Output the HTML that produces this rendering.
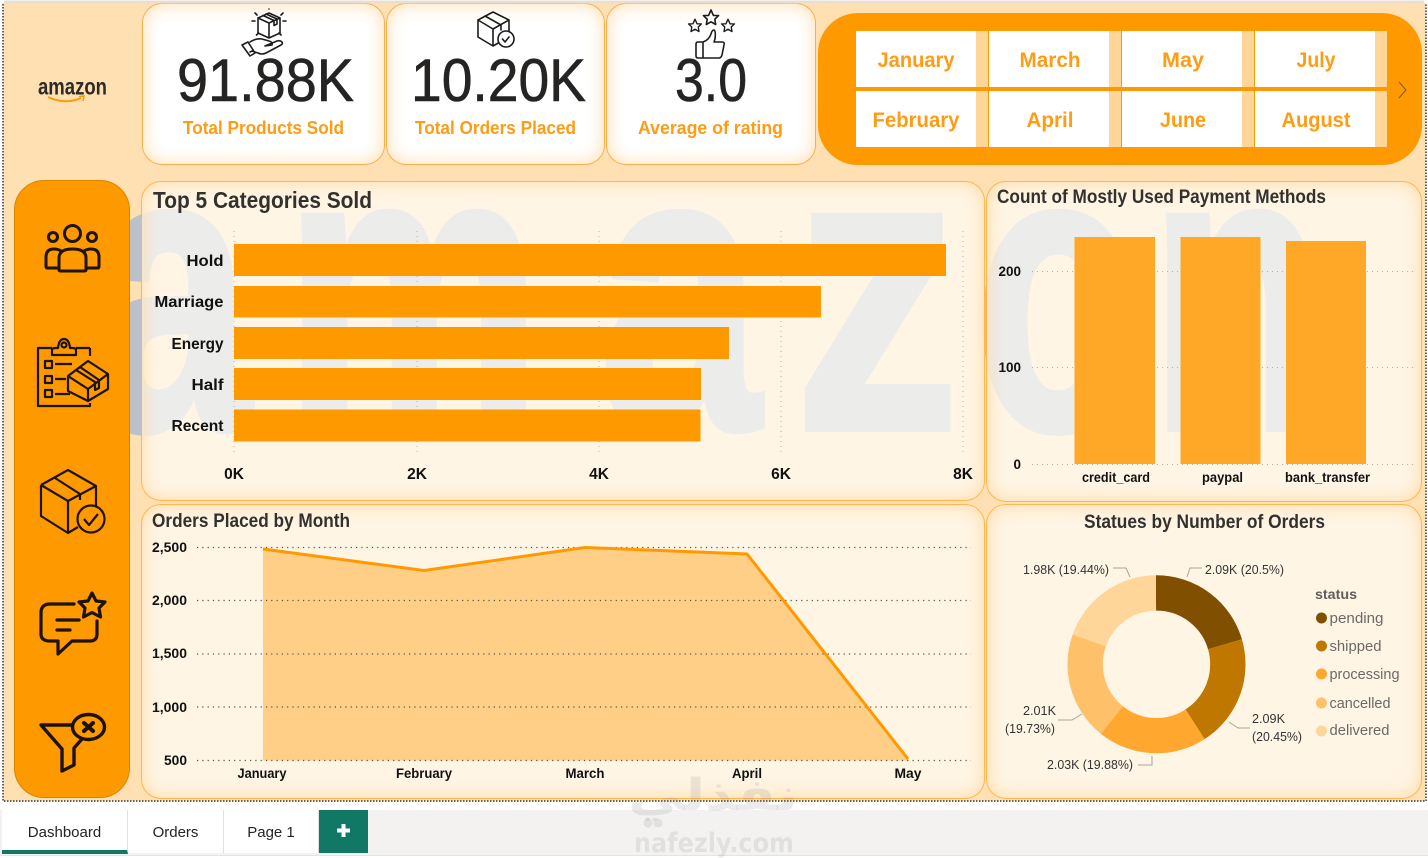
<!DOCTYPE html>
<html lang="en"><head><meta charset="utf-8"><title>Amazon Dashboard</title>
<style>
html,body{margin:0;padding:0;width:1428px;height:858px;overflow:hidden;background:#fff}
#root{position:relative;width:1428px;height:858px;overflow:hidden;font-family:"Liberation Sans",sans-serif}
#canvas{position:absolute;left:3px;top:3px;width:1423px;height:798px;background:#ffe0b2}
svg.l{position:absolute;left:0;top:0;width:1428px;height:858px}
.card,.panel{position:absolute;box-sizing:border-box}
.card{background:#fff;border:1px solid #f5b04a;border-radius:20px;box-shadow:inset 0 0 18px #ffdcae}
.panel{background:rgba(255,252,248,.72);border:1px solid #ffb64f;border-radius:20px;box-shadow:inset 0 0 18px #ffd9a3}
.slicer{position:absolute;left:818px;top:13px;width:604px;height:152px;background:#ff9900;border-radius:40px}
.cell{position:absolute;width:132px;height:56px;background:#ffd698}
.cell i{position:absolute;left:0;top:0;width:120px;height:56px;background:#fff}
.side{position:absolute;left:14px;top:180px;width:116px;height:618px;background:#ff9900;border:1px solid #d98500;box-sizing:border-box;border-radius:30px}
.tabs{position:absolute;left:0;top:810px;width:1428px;height:45px;background:#f3f2f1;border-bottom:1px solid #e4e4e4}
.tab{position:absolute;top:0;height:43px;background:#fff;border-right:1px solid #e1dfdd;box-sizing:border-box;text-align:center;font-size:15px;line-height:45px;color:#252423}
.plus{position:absolute;left:319px;top:810px;width:49px;height:43px;background:#117865}
</style></head><body>
<div id="root">
<div id="canvas"></div>
<svg class="l" viewBox="0 0 1428 858"><g fill="#bcc0c8" stroke="#bcc0c8" stroke-width="8" font-family="Liberation Sans,sans-serif" font-weight="700" font-size="400">
<text transform="translate(90 428) scale(.72 1)">a</text>
<text transform="translate(285 428) scale(.72 1)">m</text>
<text transform="translate(600 428) scale(.72 1)">a</text>
<text transform="translate(795 428) scale(.82 1)">z</text>
<text transform="translate(975 428) scale(.68 1)">o</text>
<text transform="translate(1150 428) scale(.72 1)">n</text></g></svg>

<div class="card" style="left:142px;top:3px;width:243px;height:162px"></div>
<div class="card" style="left:386px;top:3px;width:219px;height:162px"></div>
<div class="card" style="left:606px;top:3px;width:210px;height:162px"></div>

<div class="slicer"></div>
<div class="cell" style="left:856px;top:31px"><i></i></div>
<div class="cell" style="left:989px;top:31px"><i></i></div>
<div class="cell" style="left:1122px;top:31px"><i></i></div>
<div class="cell" style="left:1255px;top:31px"><i></i></div>
<div class="cell" style="left:856px;top:91px"><i></i></div>
<div class="cell" style="left:989px;top:91px"><i></i></div>
<div class="cell" style="left:1122px;top:91px"><i></i></div>
<div class="cell" style="left:1255px;top:91px"><i></i></div>

<div class="side"></div>
<div class="panel" style="left:141px;top:181px;width:844px;height:320px"></div>
<div class="panel" style="left:986px;top:181px;width:436px;height:321px"></div>
<div class="panel" style="left:141px;top:504px;width:844px;height:295px"></div>
<div class="panel" style="left:986px;top:504px;width:436px;height:295px"></div>

<div class="tabs"></div>
<div class="tab" style="left:2px;top:810px;width:126px;border-bottom:4px solid #117865;height:44px;line-height:45px">Dashboard</div>
<div class="tab" style="left:128px;top:810px;width:96px">Orders</div>
<div class="tab" style="left:224px;top:810px;width:95px">Page 1</div>
<div class="plus"></div>

<svg class="l" viewBox="0 0 1428 858" font-family="Liberation Sans,sans-serif">
<!-- canvas dotted border -->
<g fill="none" stroke="#666" stroke-width="2" stroke-dasharray="1.500 1.500">
<path d="M3 4V801H1426V4"/></g>
<path d="M4 2H1424" stroke="#e8dfd2" stroke-width="3"/>

<!-- logo -->
<text x="38" y="94.500" font-size="23" font-weight="700" fill="#2e2a25" textLength="69" lengthAdjust="spacingAndGlyphs">amazon</text>
<path d="M48 97Q65 105 81 98" fill="none" stroke="#ff9900" stroke-width="2"/><path d="M79 96.500L84 96 83 101" fill="none" stroke="#ff9900" stroke-width="1.500"/>

<!-- KPI -->
<g fill="#252423" stroke="#252423" stroke-width=".6" font-size="60">
<text x="177" y="101" textLength="177" lengthAdjust="spacingAndGlyphs">91.88K</text>
<text x="411" y="101" textLength="175" lengthAdjust="spacingAndGlyphs">10.20K</text>
<text x="675" y="101" textLength="72" lengthAdjust="spacingAndGlyphs">3.0</text></g>
<g fill="#ff9c14" font-size="18" font-weight="700">
<text x="183" y="134" textLength="161" lengthAdjust="spacingAndGlyphs">Total Products Sold</text>
<text x="415" y="134" textLength="161" lengthAdjust="spacingAndGlyphs">Total Orders Placed</text>
<text x="638" y="134" textLength="145" lengthAdjust="spacingAndGlyphs">Average of rating</text></g>

<!-- KPI icons -->
<g fill="none" stroke="#1c1c1c" stroke-width="1.600" stroke-linejoin="round" stroke-linecap="round">
<path d="M269 13l-11 5v15l11 5 11-5V18zM258 18l11 5 11-5M269 23v15M263 15.500l11 5v5l3-1.500v-5l-11-5"/>
<path d="M252 21h3M283 21h3M255 13l2 2M283 13l-2 2M269 9v0M258.500 33l-2 2M279 33l2 2"/>
<path d="M250 42q6-4 12-3l7 2q4 1 3 4l-7 1 12-5q3-1 5 1 1 2-1 3l-15 8q-4 2-8 0l-6-2-2 1"/>
<path d="M242 45l6-3 7 11-5 3z"/>
<path d="M493 12l-15 8v17l15 9 16-9V20zM478 20l15 9 16-9M493 29v17M485 16l16 9v5"/>
<circle cx="506" cy="39" r="8" fill="#fff"/><path d="M502.500 39l2.500 3 4-5"/>
<path transform="translate(711 18)" d="M0-8 2.400-2.600 7.600-2.500 3.800 1.200 4.700 6.500 0 3.800-4.700 6.500-3.800 1.200-7.600-2.500-2.400-2.600Z"/>
<path transform="translate(695 26) scale(.85)" d="M0-8 2.400-2.600 7.600-2.500 3.800 1.200 4.700 6.500 0 3.800-4.700 6.500-3.800 1.200-7.600-2.500-2.400-2.600Z"/>
<path transform="translate(728 26) scale(.85)" d="M0-8 2.400-2.600 7.600-2.500 3.800 1.200 4.700 6.500 0 3.800-4.700 6.500-3.800 1.200-7.600-2.500-2.400-2.600Z"/>
<path d="M703 42h-5q-2 0-2 2v12q0 2 2 2h5zM703 42q6-2 8-8 1-4 3-4 2 1 1 9l-1 3h8q3 0 2 3l-2 10q-1 3-3 3h-16"/>
</g>

<!-- slicer text -->
<g fill="#ff9c14" font-size="21" font-weight="700" text-anchor="middle">
<text x="916" y="67" textLength="77" lengthAdjust="spacingAndGlyphs">January</text>
<text x="1050" y="67" textLength="61" lengthAdjust="spacingAndGlyphs">March</text>
<text x="1183" y="67" textLength="42" lengthAdjust="spacingAndGlyphs">May</text>
<text x="1316" y="67" textLength="39" lengthAdjust="spacingAndGlyphs">July</text>
<text x="916" y="127" textLength="87" lengthAdjust="spacingAndGlyphs">February</text>
<text x="1050" y="127" textLength="47" lengthAdjust="spacingAndGlyphs">April</text>
<text x="1183" y="127" textLength="46" lengthAdjust="spacingAndGlyphs">June</text>
<text x="1316" y="127" textLength="69" lengthAdjust="spacingAndGlyphs">August</text></g>
<path d="M1399 82l7 8-7 8" fill="none" stroke="#7a5a20" stroke-width="1"/>
<path d="M856 89H1387" stroke="#ff9900" stroke-width="4"/>

<!-- sidebar icons -->
<g fill="none" stroke="#1f1403" stroke-width="3" stroke-linejoin="round" stroke-linecap="round">
<circle cx="72.500" cy="233.500" r="8"/><circle cx="53" cy="237" r="4.500"/><circle cx="92" cy="237" r="4.500"/>
<path d="M59 270v-12q0-9 13.500-9T86 258v12q0 1-2 1H61q-2 0-2-1z"/>
<path d="M59 268H47q-1 0-1-2v-9q0-8 8-8 4 0 7 2M86 268h12q1 0 1-2v-9q0-8-8-8-4 0-7 2"/>
</g>
<g fill="none" stroke="#1c1305" stroke-width="2.200" stroke-linejoin="round">
<path d="M90 348v8M52 348H38v58h52v-3M76 348h14"/>
<path d="M52 353v-3q0-2 3-2h3q1-9 6-9t6 9h3q3 0 3 2v5H52z"/><circle cx="64" cy="345" r="2.500"/>
<path d="M45 361h7v7h-7zM45 376h7v7h-7zM45 390h7v7h-7zM55 364h17M55 379h11M55 394h15"/>
<path d="M68 376l20-15 20 13v15l-20 12-20-10zM68 376l20 13 20-15M88 389v12M76 370l19 12v8l4-2 0-8-19-13"/>
</g>
<g fill="none" stroke="#1f1403" stroke-width="2.200" stroke-linejoin="round">
<path d="M41 485l27-15 28 16v20M41 485v31l27 17 10-6M41 485l27 16 28-15M68 501v32M55 478l25 16v6"/>
<circle cx="91" cy="519" r="13.500"/><path d="M84 519l5 6 9-11"/>
</g>
<g fill="none" stroke="#1c1305" stroke-width="3.200" stroke-linejoin="round" stroke-linecap="round">
<path d="M74 604H50q-9 0-9 9v21q0 7 9 7h8v13l14-13h18q7 0 7-7v-13"/>
<path d="M57 620h22M57 630h13"/>
<path d="M92 593l4 8 9 1-6 6 1.500 9-8.500-4.500-8.500 4.500 1.500-9-6-6 9-1z"/>
</g>
<g fill="none" stroke="#1c1305" stroke-width="3.400" stroke-linejoin="round" stroke-linecap="round">
<ellipse cx="88.500" cy="727" rx="16" ry="12.500"/>
<path d="M84 723l9 8M93 723l-9 8" stroke-width="4"/>
<path d="M72 725H41l21 24v22l12-6v-17l8-9"/>
</g>

<!-- Top 5 categories -->
<text x="153" y="208" font-size="23" font-weight="700" fill="#33312e" textLength="219" lengthAdjust="spacingAndGlyphs">Top 5 Categories Sold</text>
<g stroke="#b9b3aa" stroke-width="1" stroke-dasharray="1 4">
<path d="M234 231V455M417 231V455M599 231V455M781 231V455M963 231V455"/></g>
<g fill="#ff9900"><rect x="234" y="244" width="712" height="32"/><rect x="234" y="286" width="587" height="31.500"/><rect x="234" y="327" width="495" height="32"/><rect x="234" y="368" width="467" height="32"/><rect x="234" y="409.500" width="466.500" height="32"/></g>
<g fill="#111" font-size="15.500" font-weight="700" text-anchor="end">
<text x="223.500" y="266" textLength="37" lengthAdjust="spacingAndGlyphs">Hold</text>
<text x="223.500" y="307" textLength="69" lengthAdjust="spacingAndGlyphs">Marriage</text>
<text x="223.500" y="349" textLength="52" lengthAdjust="spacingAndGlyphs">Energy</text>
<text x="223.500" y="390" textLength="32" lengthAdjust="spacingAndGlyphs">Half</text>
<text x="223.500" y="431" textLength="52" lengthAdjust="spacingAndGlyphs">Recent</text></g>
<g fill="#111" font-size="15.500" font-weight="700" text-anchor="middle">
<text x="234" y="479">0K</text><text x="417" y="479">2K</text><text x="599" y="479">4K</text><text x="781" y="479">6K</text><text x="963" y="479">8K</text></g>

<!-- Payment -->
<text x="997" y="203" font-size="19" font-weight="700" fill="#33312e" textLength="329" lengthAdjust="spacingAndGlyphs">Count of Mostly Used Payment Methods</text>
<g stroke="#b9b3aa" stroke-width="1" stroke-dasharray="1 4"><path d="M1032 271.500H1415M1032 367.500H1415M1032 464.500H1415"/></g>
<g fill="#ffa726"><rect x="1074.500" y="237" width="80.500" height="227"/><rect x="1180.500" y="237" width="80" height="227"/><rect x="1286" y="241" width="80" height="223"/></g>
<g fill="#111" font-size="13.500" font-weight="700" text-anchor="end">
<text x="1021" y="276">200</text><text x="1021" y="372">100</text><text x="1021" y="469">0</text></g>
<g fill="#111" font-size="13.500" font-weight="700">
<text x="1082" y="482" textLength="68" lengthAdjust="spacingAndGlyphs">credit_card</text>
<text x="1202" y="482" textLength="41" lengthAdjust="spacingAndGlyphs">paypal</text>
<text x="1285" y="482" textLength="85" lengthAdjust="spacingAndGlyphs">bank_transfer</text></g>

<!-- Line chart -->
<text x="152" y="527" font-size="19" font-weight="700" fill="#33312e" textLength="198" lengthAdjust="spacingAndGlyphs">Orders Placed by Month</text>
<polygon points="263,549 424,570.500 585,547.500 747,554 908,759 908,760.500 263,760.500" fill="#ffcf88"/>
<g stroke="#57504a" stroke-width="1.200" stroke-dasharray="1.200 4.100"><path d="M197 547.500H971M197 600.500H971M197 654H971M197 707H971M197 760.500H971"/></g>
<polyline points="263,549 424,570.500 585,547.500 747,554 908,759" fill="none" stroke="#ff9900" stroke-width="3"/>
<g fill="#111" font-size="13.500" font-weight="700" text-anchor="end">
<text x="187" y="552" textLength="35" lengthAdjust="spacingAndGlyphs">2,500</text><text x="187" y="605" textLength="35" lengthAdjust="spacingAndGlyphs">2,000</text><text x="187" y="658" textLength="35" lengthAdjust="spacingAndGlyphs">1,500</text><text x="187" y="712" textLength="35" lengthAdjust="spacingAndGlyphs">1,000</text><text x="187" y="765" textLength="23" lengthAdjust="spacingAndGlyphs">500</text></g>
<g fill="#111" font-size="13.500" font-weight="700" text-anchor="middle">
<text x="262" y="778" textLength="49" lengthAdjust="spacingAndGlyphs">January</text><text x="424" y="778" textLength="56" lengthAdjust="spacingAndGlyphs">February</text><text x="585" y="778" textLength="39" lengthAdjust="spacingAndGlyphs">March</text><text x="747" y="778" textLength="30" lengthAdjust="spacingAndGlyphs">April</text><text x="908" y="778" textLength="27" lengthAdjust="spacingAndGlyphs">May</text></g>

<!-- Donut -->
<text x="1084" y="528" font-size="19" font-weight="700" fill="#33312e" textLength="241" lengthAdjust="spacingAndGlyphs">Statues by Number of Orders</text>
<g fill="none" stroke-width="35.300" transform="rotate(-90 1156.500 664.300)">
<circle cx="1156.500" cy="664.300" r="71.350" pathLength="100" stroke="#804f00" stroke-dasharray="20.500 79.500"/>
<circle cx="1156.500" cy="664.300" r="71.350" pathLength="100" stroke="#bf7700" stroke-dasharray="20.450 79.550" stroke-dashoffset="-20.500"/>
<circle cx="1156.500" cy="664.300" r="71.350" pathLength="100" stroke="#ffa72e" stroke-dasharray="19.880 80.120" stroke-dashoffset="-40.950"/>
<circle cx="1156.500" cy="664.300" r="71.350" pathLength="100" stroke="#ffc06a" stroke-dasharray="19.730 80.270" stroke-dashoffset="-60.830"/>
<circle cx="1156.500" cy="664.300" r="71.350" pathLength="100" stroke="#ffd699" stroke-dasharray="19.440 80.560" stroke-dashoffset="-80.560"/>
</g>
<g fill="none" stroke="#a8a39c" stroke-width="1">
<path d="M1113 568H1126L1130 577M1187 577L1190 568H1202M1058 720H1072L1082 714M1229 722L1238 728H1250M1138 765H1152V756"/></g>
<g fill="#333" font-size="12.500">
<text x="1023" y="574" textLength="86" lengthAdjust="spacingAndGlyphs">1.98K (19.44%)</text>
<text x="1205" y="574" textLength="79" lengthAdjust="spacingAndGlyphs">2.09K (20.5%)</text>
<text x="1023" y="715" textLength="33" lengthAdjust="spacingAndGlyphs">2.01K</text>
<text x="1005" y="733" textLength="50" lengthAdjust="spacingAndGlyphs">(19.73%)</text>
<text x="1252" y="723" textLength="33" lengthAdjust="spacingAndGlyphs">2.09K</text>
<text x="1252" y="741" textLength="50" lengthAdjust="spacingAndGlyphs">(20.45%)</text>
<text x="1047" y="769" textLength="86" lengthAdjust="spacingAndGlyphs">2.03K (19.88%)</text></g>
<text x="1315" y="599" font-size="14" font-weight="700" fill="#605e5c" textLength="42" lengthAdjust="spacingAndGlyphs">status</text>
<circle cx="1321.500" cy="618" r="5.500" fill="#804f00"/><circle cx="1321.500" cy="646" r="5.500" fill="#bf7700"/><circle cx="1321.500" cy="674" r="5.500" fill="#ffa72e"/><circle cx="1321.500" cy="703" r="5.500" fill="#ffc06a"/><circle cx="1321.500" cy="731" r="5.500" fill="#ffd699"/>
<g fill="#6b6967" font-size="15">
<text x="1329.500" y="623" textLength="54" lengthAdjust="spacingAndGlyphs">pending</text>
<text x="1329.500" y="651" textLength="52" lengthAdjust="spacingAndGlyphs">shipped</text>
<text x="1329.500" y="679" textLength="70" lengthAdjust="spacingAndGlyphs">processing</text>
<text x="1329.500" y="708" textLength="61" lengthAdjust="spacingAndGlyphs">cancelled</text>
<text x="1329.500" y="735" textLength="60" lengthAdjust="spacingAndGlyphs">delivered</text></g>

<!-- plus -->
<path d="M343.500 824v13M337 830.500h13" stroke="#fff" stroke-width="4"/>

<!-- site watermark -->
<g fill="#8a8a8a" fill-opacity=".17" font-family="DejaVu Sans,sans-serif">
<text x="798" y="810" font-size="44" font-weight="700" textLength="170" lengthAdjust="spacingAndGlyphs" direction="rtl" unicode-bidi="plaintext">نفذلي</text>
<circle cx="648" cy="823" r="4.500"/><circle cx="658" cy="823" r="4.500"/>
<text x="634" y="852" font-size="27" font-weight="700" textLength="160" lengthAdjust="spacingAndGlyphs">nafezly.com</text></g>
</svg>
</div>
</body></html>
